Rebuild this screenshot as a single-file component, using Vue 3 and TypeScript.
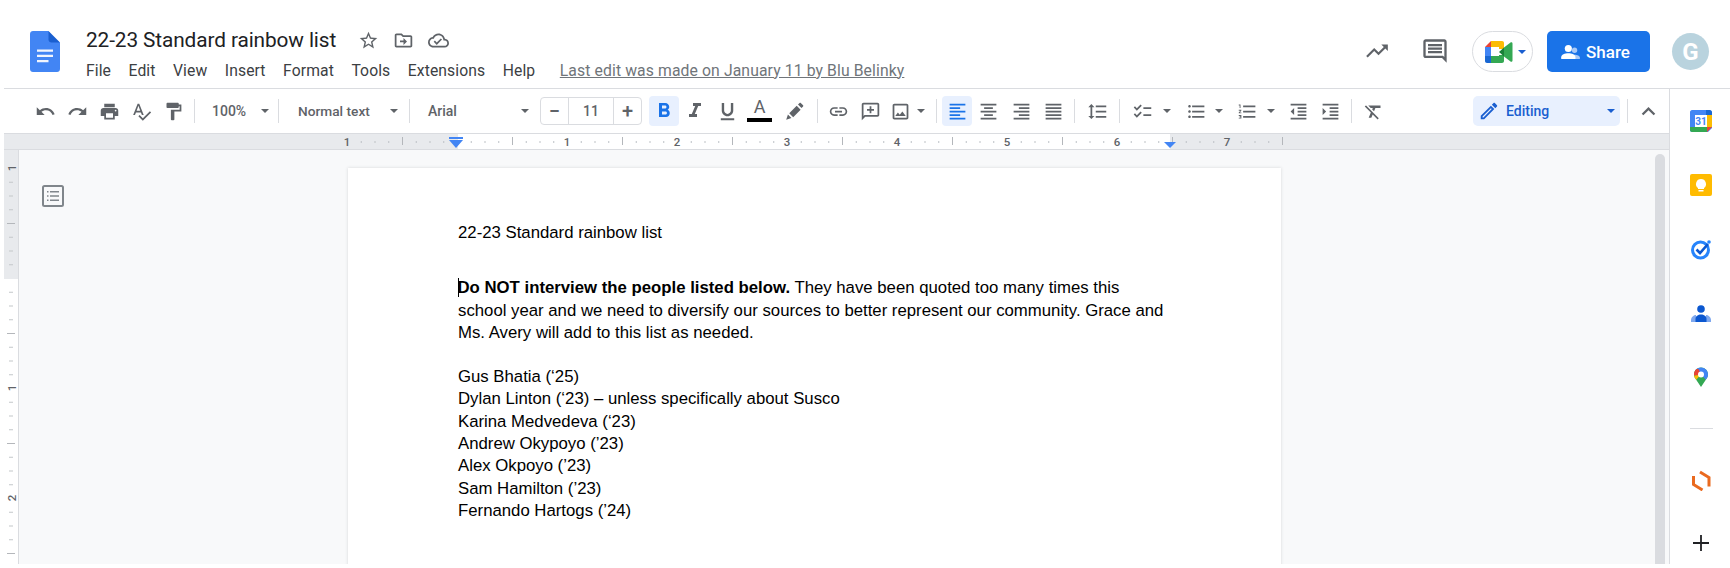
<script setup lang="ts">
interface Tool {
  kind: 'icon' | 'caret' | 'sep' | 'zoom' | 'style' | 'font' | 'size' | 'color' | 'edit'
  d?: string
  w?: number
  ml?: number
  on?: boolean
  size?: number
}

const P = {
  undo: 'M12.5 8c-2.65 0-5.05.99-6.9 2.6L2 7v9h9l-3.62-3.62c1.39-1.16 3.16-1.88 5.12-1.88 3.54 0 6.55 2.31 7.6 5.5l2.37-.78C21.08 11.03 17.15 8 12.5 8z',
  redo: 'M18.4 10.6C16.55 8.99 14.15 8 11.5 8c-4.65 0-8.58 3.03-9.96 7.22L3.9 16c1.05-3.19 4.05-5.5 7.6-5.5 1.95 0 3.73.72 5.12 1.88L13 16h9V7l-3.6 3.6z',
  print: 'M19 8H5c-1.66 0-3 1.34-3 3v6h4v4h12v-4h4v-6c0-1.66-1.34-3-3-3zm-3 11H8v-5h8v5zm3-7c-.55 0-1-.45-1-1s.45-1 1-1 1 .45 1 1-.45 1-1 1zm-1-9H6v4h12V3z',
  spell: 'M12.45 16h2.09L9.43 3H7.57L2.46 16h2.09l1.12-3h5.64l1.14 3zm-6.02-5L8.5 5.48 10.57 11H6.43zm15.16.59l-8.09 8.09L9.83 16l-1.41 1.41 5.09 5.09L23 13l-1.41-1.41z',
  paint: 'M18 4V3c0-.55-.45-1-1-1H5c-.55 0-1 .45-1 1v4c0 .55.45 1 1 1h12c.55 0 1-.45 1-1V6h1v4H9v11c0 .55.45 1 1 1h2c.55 0 1-.45 1-1v-9h8V4h-3z',
  bold: 'M15.6 10.79c.97-.67 1.65-1.77 1.65-2.79 0-2.26-1.75-4-4-4H7v14h7.04c2.09 0 3.71-1.7 3.71-3.79 0-1.52-.86-2.82-2.15-3.42zM10 6.5h3c.83 0 1.5.67 1.5 1.5s-.67 1.5-1.5 1.5h-3v-3zm3.5 9H10v-3h3.5c.83 0 1.5.67 1.5 1.5s-.67 1.5-1.5 1.5z',
  italic: 'M10 4v3h2.21l-3.42 8H6v3h8v-3h-2.21l3.42-8H18V4z',
  under: 'M12 17c3.31 0 6-2.69 6-6V3h-2.5v8c0 1.93-1.57 3.5-3.5 3.5S8.5 12.93 8.5 11V3H6v8c0 3.31 2.69 6 6 6zm-7 2v2h14v-2H5z',
  high: 'M2.500 21.500l2-6 4 4zM6 14l8.500-8.500 4.500 4.500-8.500 8.500zM16 4l1.800-1.800c.4-.4 1-.4 1.400 0l2.600 2.600c.4.4.4 1 0 1.400L20 8z',
  link: 'M3.9 12c0-1.71 1.39-3.1 3.1-3.1h4V7H7c-2.76 0-5 2.24-5 5s2.24 5 5 5h4v-1.9H7c-1.71 0-3.1-1.39-3.1-3.1zM8 13h8v-2H8v2zm9-6h-4v1.9h4c1.71 0 3.1 1.39 3.1 3.1s-1.39 3.1-3.1 3.1h-4V17h4c2.76 0 5-2.24 5-5s-2.24-5-5-5z',
  addc: 'M20 2H4c-1.1 0-2 .9-2 2v18l4-4h14c1.1 0 2-.9 2-2V4c0-1.1-.9-2-2-2zm0 14H5.17L4 17.17V4h16v12zM11 14h2v-3h3V9h-3V6h-2v3H8v2h3z',
  image: 'M19 5v14H5V5h14m0-2H5c-1.1 0-2 .9-2 2v14c0 1.1.9 2 2 2h14c1.1 0 2-.9 2-2V5c0-1.1-.9-2-2-2zm-4.86 8.86l-3 3.87L9 13.14 6 17h12l-3.86-5.14z',
  left: 'M15 15H3v2h12v-2zm0-8H3v2h12V7zM3 13h18v-2H3v2zm0 8h18v-2H3v2zM3 3v2h18V3H3z',
  center: 'M7 15v2h10v-2H7zm-4 6h18v-2H3v2zm0-8h18v-2H3v2zm4-6v2h10V7H7zM3 3v2h18V3H3z',
  right: 'M3 21h18v-2H3v2zm6-4h12v-2H9v2zm-6-4h18v-2H3v2zm6-4h12V7H9v2zM3 3v2h18V3H3z',
  justify: 'M3 21h18v-2H3v2zm0-4h18v-2H3v2zm0-4h18v-2H3v2zm0-4h18V7H3v2zm0-6v2h18V3H3z',
  spacing: 'M6 7h2.5L5 3.5 1.5 7H4v10H1.5L5 20.5 8.5 17H6V7zm4-2v2h12V5H10zm0 14h12v-2H10v2zm0-6h12v-2H10v2z',
  check: 'M22 7h-9v2h9V7zm0 8h-9v2h9v-2zM5.54 11L2 7.46l1.41-1.41 2.12 2.12 4.24-4.24 1.41 1.41L5.54 11zm0 8L2 15.46l1.41-1.41 2.12 2.12 4.24-4.24 1.41 1.41L5.54 19z',
  bullet: 'M4 10.5c-.83 0-1.5.67-1.5 1.5s.67 1.5 1.5 1.5 1.5-.67 1.5-1.5-.67-1.5-1.5-1.5zm0-6c-.83 0-1.5.67-1.5 1.5S3.17 7.5 4 7.5 5.5 6.83 5.5 6 4.83 4.5 4 4.5zm0 12c-.83 0-1.5.68-1.5 1.5s.68 1.5 1.5 1.5 1.5-.68 1.5-1.5-.67-1.5-1.5-1.5zM7 19h14v-2H7v2zm0-6h14v-2H7v2zm0-8v2h14V5H7z',
  number: 'M2 17h2v.5H3v1h1v.5H2v1h3v-4H2v1zm1-9h1V4H2v1h1v3zm-1 3h1.8L2 13.1v.9h3v-1H3.2L5 10.9V10H2v1zm5-6v2h14V5H7zm0 14h14v-2H7v2zm0-6h14v-2H7v2z',
  dec: 'M11 17h10v-2H11v2zm-8-5l4 4V8l-4 4zm0 9h18v-2H3v2zM3 3v2h18V3H3zm8 6h10V7H11v2zm0 4h10v-2H11v2z',
  inc: 'M3 21h18v-2H3v2zM3 8v8l4-4-4-4zm8 9h10v-2H11v2zM3 3v2h18V3H3zm8 6h10V7H11v2zm0 4h10v-2H11v2z',
  clear: 'M3.27 5L2 6.27l6.97 6.97L6.5 19h3l1.57-3.66L16.73 21 18 19.73 3.55 5.27 3.27 5zM6 5v.18L8.82 8h2.4l-.72 1.68 2.1 2.1L14.21 8H20V5H6z',
  less: 'M12 8l-6 6 1.41 1.41L12 10.83l4.59 4.58L18 14z',
}

const tools: Tool[] = [
  { kind: 'icon', d: P.undo, w: 32, ml: 25 },
  { kind: 'icon', d: P.redo, w: 32 },
  { kind: 'icon', d: P.print, w: 32 },
  { kind: 'icon', d: P.spell, w: 32 },
  { kind: 'icon', d: P.paint, w: 32 },
  { kind: 'sep', ml: 5 },
  { kind: 'zoom' },
  { kind: 'sep' },
  { kind: 'style' },
  { kind: 'sep' },
  { kind: 'font' },
  { kind: 'size', ml: 8 },
  { kind: 'icon', d: P.bold, w: 30, ml: 7, on: true, size: 24 },
  { kind: 'icon', d: P.italic, w: 32, size: 24 },
  { kind: 'icon', d: P.under, w: 32, size: 23 },
  { kind: 'color', w: 33 },
  { kind: 'icon', d: P.high, w: 36 },
  { kind: 'sep', ml: 5 },
  { kind: 'icon', d: P.link, w: 32, ml: 4 },
  { kind: 'icon', d: P.addc, w: 32 },
  { kind: 'icon', d: P.image, w: 28 },
  { kind: 'caret', w: 14 },
  { kind: 'sep', ml: 8 },
  { kind: 'icon', d: P.left, w: 30, ml: 5, on: true },
  { kind: 'icon', d: P.center, w: 33 },
  { kind: 'icon', d: P.right, w: 32 },
  { kind: 'icon', d: P.justify, w: 32 },
  { kind: 'sep', ml: 5 },
  { kind: 'icon', d: P.spacing, w: 32, ml: 6 },
  { kind: 'sep', ml: 6 },
  { kind: 'icon', d: P.check, w: 32, ml: 6 },
  { kind: 'caret', w: 14, ml: 2 },
  { kind: 'icon', d: P.bullet, w: 32, ml: 6 },
  { kind: 'caret', w: 14 },
  { kind: 'icon', d: P.number, w: 32, ml: 5 },
  { kind: 'caret', w: 14, ml: 1 },
  { kind: 'icon', d: P.dec, w: 32, ml: 4 },
  { kind: 'icon', d: P.inc, w: 32 },
  { kind: 'sep', ml: 5 },
  { kind: 'icon', d: P.clear, w: 32, ml: 5 },
  { kind: 'edit', ml: 84 },
  { kind: 'sep', ml: 7 },
  { kind: 'icon', d: P.less, w: 32, ml: 4, size: 27 },
]

const toolStyle = (t: Tool) => ({
  width: t.w ? `${t.w}px` : undefined,
  marginLeft: t.ml ? `${t.ml}px` : undefined,
})

const menus = ['File', 'Edit', 'View', 'Insert', 'Format', 'Tools', 'Extensions', 'Help']

// Horizontal ruler, in ruler pixels (x = 0 is the page's x = 4)
const origin = 453
const hTicks: { x: number; long: boolean }[] = []
for (let k = -8; k <= 60; k++) {
  if (k % 8 === 0) continue
  hTicks.push({ x: origin + k * 13.75, long: k % 4 === 0 })
}
const hNums = [
  { n: 1, x: origin - 110 },
  ...[1, 2, 3, 4, 5, 6, 7].map((n) => ({ n, x: origin + n * 110 })),
]

// Vertical ruler, y = 0 is the page's y = 150
const vTicks: { y: number; long: boolean }[] = []
for (let k = 0; k <= 32; k++) {
  if (k % 8 === 0) continue
  vTicks.push({ y: 18 + k * 13.75, long: k % 4 === 0 })
}
const vNums = [
  { n: 1, y: 18 },
  { n: 1, y: 238 },
  { n: 2, y: 348 },
]

const people = [
  'Gus Bhatia (‘25)',
  'Dylan Linton (‘23) – unless specifically about Susco',
  'Karina Medvedeva (‘23)',
  'Andrew Okypoyo (’23)',
  'Alex Okpoyo (’23)',
  'Sam Hamilton (’23)',
  'Fernando Hartogs (’24)',
]
</script>

<template>
  <div class="app">
    <header class="header">
      <svg class="logo" width="30" height="41" viewBox="0 0 30 41">
        <path d="M18.5 0H3C1.3 0 0 1.3 0 3v35c0 1.700 1.300 3 3 3h24c1.700 0 3-1.300 3-3V11.500L23 7z" fill="#4285f4" />
        <path d="M18.500 0v8.500c0 1.700 1.300 3 3 3H30z" fill="#1a5fd0" />
        <path d="M7 18.500h16v2.300H7zM7 23.800h16v2.300H7zM7 29h11.500v2.300H7z" fill="#f1f5fd" />
      </svg>
      <div class="titles">
        <div class="title-row">
          <span class="doc-name">22-23 Standard rainbow list</span>
          <svg class="hicon star" width="21" height="21" viewBox="0 0 24 24"><path fill="#5f6368" d="M22 9.240l-7.190-.62L12 2 9.190 8.630 2 9.240l5.460 4.730L5.820 21 12 17.270 18.180 21l-1.630-7.030L22 9.240zM12 15.400l-3.760 2.270 1-4.280-3.320-2.880 4.380-.38L12 6.100l1.710 4.040 4.380.38-3.320 2.880 1 4.280L12 15.400z" /></svg>
          <svg class="hicon folder" width="21" height="21" viewBox="0 0 24 24"><path fill="#5f6368" d="M20 6h-8l-2-2H4c-1.100 0-1.990.9-1.990 2L2 18c0 1.100.9 2 2 2h16c1.100 0 2-.9 2-2V8c0-1.100-.9-2-2-2zm0 12H4V6h5.170l2 2H20v10zm-8-4H8v-2h4V9l4 4-4 4v-3z" /></svg>
          <svg class="hicon cloud" width="21" height="21" viewBox="0 0 24 24"><path fill="#5f6368" d="M19.350 10.040C18.670 6.590 15.640 4 12 4 9.110 4 6.600 5.640 5.350 8.040 2.340 8.360 0 10.910 0 14c0 3.310 2.690 6 6 6h13c2.760 0 5-2.240 5-5 0-2.640-2.050-4.780-4.650-4.960zM19 18H6c-2.210 0-4-1.790-4-4 0-2.050 1.530-3.760 3.560-3.970l1.070-.11.5-.95C8.080 7.140 9.940 6 12 6c2.620 0 4.880 1.860 5.390 4.430l.3 1.500 1.530.11c1.560.1 2.780 1.410 2.780 2.960 0 1.650-1.350 3-3 3zm-9-3.820l-2.090-2.090L6.500 13.500 10 17l6.010-6.010-1.410-1.410z" /></svg>
        </div>
        <nav class="menu-row">
          <span v-for="m in menus" :key="m" class="menu">{{ m }}</span>
          <span class="last-edit">Last edit was made on January 11 by Blu Belinky</span>
        </nav>
      </div>
      <div class="actions">
        <svg class="act trend" width="26" height="26" viewBox="0 0 24 24"><path fill="#5f6368" d="M16 6l2.290 2.290-4.880 4.880-4-4L2 16.590 3.410 18l6-6 4 4 6.300-6.290L22 12V6z" /></svg>
        <svg class="act comment" width="28" height="28" viewBox="0 0 24 24"><path fill="#5f6368" d="M21.990 4c0-1.100-.89-2-1.990-2H4c-1.100 0-2 .9-2 2v12c0 1.100.9 2 2 2h14l4 4-.01-18zM20 4v13.170L18.830 16H4V4h16zM6 12h12v2H6zm0-3h12v2H6zm0-3h12v2H6z" /></svg>
        <div class="meet">
          <svg width="28" height="22" viewBox="0 0 28 22">
            <path d="M6 0L0 6h6z" fill="#ea4335" />
            <path d="M6 0h11c1.200 0 2 .8 2 2v6l-5 0V6H6z" fill="#fbbc04" />
            <path d="M0 6h6v9H0z" fill="#4285f4" />
            <path d="M0 15h6v7H2c-1.200 0-2-.8-2-2z" fill="#1967d2" />
            <path d="M6 15h8v-1l5 0v6c0 1.200-.8 2-2 2H6z" fill="#34a853" />
            <path d="M14 11l5-4.500v9z" fill="#188038" />
            <path d="M19 6.500l6.500-5c.9-.6 2-.1 2 1v17c0 1.100-1.100 1.600-2 1l-6.500-5z" fill="#34a853" />
          </svg>
          <i class="tri blue" />
        </div>
        <div class="share">
          <svg width="20" height="16" viewBox="0 0 22 18">
            <circle cx="15" cy="7" r="3" fill="#a9c9f7" />
            <path d="M11 17c0-3 1-5 4-5s6 1.500 6 3v2z" fill="#a9c9f7" />
            <circle cx="8" cy="5" r="4" fill="#fff" />
            <path d="M0 17v-2c0-3 4-4.500 8-4.500s8 1.500 8 4.500v2z" fill="#fff" />
          </svg>
          <span>Share</span>
        </div>
        <div class="avatar">G</div>
      </div>
    </header>

    <div class="main">
      <section class="editor">
        <div class="toolbar">
          <template v-for="(t, i) in tools" :key="i">
            <div v-if="t.kind === 'icon'" class="tool" :class="{ on: t.on }" :style="toolStyle(t)">
              <svg :width="t.size ?? 21" :height="t.size ?? 21" viewBox="0 0 24 24"><path :d="t.d" /></svg>
            </div>
            <div v-else-if="t.kind === 'caret'" class="tool" :style="toolStyle(t)"><i class="tri" /></div>
            <div v-else-if="t.kind === 'sep'" class="sep" :style="toolStyle(t)" />
            <div v-else-if="t.kind === 'zoom'" class="drop zoom"><span>100%</span><i class="tri" /></div>
            <div v-else-if="t.kind === 'style'" class="drop style"><span>Normal text</span><i class="tri" /></div>
            <div v-else-if="t.kind === 'font'" class="drop font"><span>Arial</span><i class="tri" /></div>
            <div v-else-if="t.kind === 'size'" class="size" :style="toolStyle(t)">
              <span class="size-btn">−</span><span class="size-val">11</span><span class="size-btn">+</span>
            </div>
            <div v-else-if="t.kind === 'color'" class="tool color" :style="toolStyle(t)">
              <span class="color-a">A</span><i class="color-bar" />
            </div>
            <div v-else class="editing" :style="toolStyle(t)">
              <svg width="22" height="22" viewBox="0 0 24 24"><path fill="#1a5fd0" d="M14.060 9.020l.92.92L5.920 19H5v-.92l9.060-9.060M17.660 3c-.25 0-.51.1-.7.29l-1.830 1.830 3.750 3.750 1.830-1.830c.39-.39.39-1.020 0-1.410l-2.340-2.340c-.2-.2-.45-.29-.71-.29zm-3.600 3.190L3 17.250V21h3.750L17.810 9.940l-3.750-3.750z" /></svg>
              <span>Editing</span>
              <i class="tri blue" />
            </div>
          </template>
        </div>

        <svg class="h-ruler" width="1665" height="15" viewBox="0 0 1665 15">
          <rect x="454" y="0" width="712" height="15" fill="#fff" />
          <rect v-for="(t, i) in hTicks" :key="i" :x="t.x" :y="t.long ? 3 : 7" width="1" :height="t.long ? 8 : 2" :fill="t.long ? '#b4b7bb' : '#bdc1c6'" />
          <text v-for="(t, i) in hNums" :key="'n' + i" :x="t.x" y="12" text-anchor="middle" class="rnum">{{ t.n }}</text>
          <path d="M445 3h14v2h-14zM445 6h14l-7 8z" fill="#4285f4" />
          <path d="M1160 8h12l-6 6z" fill="#4285f4" />
        </svg>

        <div class="work">
          <svg class="v-ruler" width="14" height="414" viewBox="0 0 14 414">
            <rect x="0" y="0" width="14" height="129" fill="#e8eaed" />
            <rect v-for="(t, i) in vTicks" :key="i" :x="t.long ? 3 : 5" :y="t.y" :width="t.long ? 8 : 4" height="1" :fill="t.long ? '#b4b7bb' : '#c4c7ca'" />
            <text v-for="(t, i) in vNums" :key="i" class="rnum" text-anchor="middle" :transform="`translate(12 ${t.y}) rotate(-90)`">{{ t.n }}</text>
          </svg>
          <div class="canvas">
            <svg class="outline-icon" width="22" height="22" viewBox="0 0 22 22">
              <rect x="1" y="1" width="20" height="20" rx="1.500" fill="none" stroke="#80868b" stroke-width="2" />
              <path d="M5 6h1.500v1.500H5zM5 10.200h1.500v1.500H5zM5 14.500h1.500V16H5zM8 6h9v1.500H8zM8 10.200h9v1.500H8zM8 14.500h9V16H8z" fill="#80868b" />
            </svg>
            <article class="page">
              <p class="gap-title">22-23 Standard rainbow list</p>
              <p class="gap-para"><span class="cursor" /><b>Do NOT interview the people listed below.</b> They have been quoted too many times this<br />school year and we need to diversify our sources to better represent our community. Grace and<br />Ms. Avery will add to this list as needed.</p>
              <p v-for="p in people" :key="p">{{ p }}</p>
            </article>
            <div class="scrollbar" />
          </div>
        </div>
      </section>

      <aside class="side">
        <svg class="side-icon" width="22" height="22" viewBox="0 0 22 22">
          <path d="M2 0h16l4 4v14l-4 4H2c-1 0-2-1-2-2V2c0-1 1-2 2-2z" fill="#4285f4" />
          <path d="M16 0h4c1 0 2 1 2 2v3h-6z" fill="#1967d2" />
          <rect x="5" y="5" width="12" height="12" fill="#fff" />
          <rect x="17" y="5" width="5" height="12" fill="#fbbc04" />
          <path d="M0 17h17v5H2c-1 0-2-1-2-2z" fill="#34a853" />
          <path d="M17 17h5l-5 5z" fill="#ea4335" />
          <text x="11" y="15" text-anchor="middle" class="cal">31</text>
        </svg>
        <svg class="side-icon" width="22" height="22" viewBox="0 0 22 22">
          <rect width="22" height="22" rx="2" fill="#ffbb00" />
          <path d="M11 5a5 5 0 0 0-3 9v1h6v-1a5 5 0 0 0-3-9z" fill="#fff" />
          <rect x="8.500" y="16" width="5" height="1.500" fill="#fff" />
        </svg>
        <svg class="side-icon" width="22" height="22" viewBox="0 0 22 22">
          <circle cx="10.500" cy="12" r="8" fill="none" stroke="#2684fc" stroke-width="3" />
          <path d="M6.500 11.500l3.500 3.500 8-9" fill="none" stroke="#0b57d0" stroke-width="2.600" />
          <circle cx="19" cy="4" r="1.800" fill="#2684fc" />
        </svg>
        <svg class="side-icon" width="22" height="22" viewBox="0 -1 22 22">
          <circle cx="11" cy="6" r="3.800" fill="#0b57d0" />
          <path d="M1 19v-2c0-3 3-5 5-5v7z" fill="#7fa8ee" />
          <path d="M21 19v-2c0-3-3-5-5-5v7z" fill="#7fa8ee" />
          <path d="M5.500 19v-3c0-3 2.500-4.500 5.500-4.500s5.500 1.500 5.500 4.500v3z" fill="#0b57d0" />
        </svg>
        <svg class="side-icon" width="22" height="22" viewBox="0 0 22 22">
          <clipPath id="pin-shape">
            <path d="M11 1.500c-4 0-7 3-7 7 0 2 .8 3.500 2 5l5 7.500 5-7.500c1.200-1.500 2-3 2-5 0-4-3-7-7-7z" />
          </clipPath>
          <g clip-path="url(#pin-shape)">
            <rect width="22" height="22" fill="#34a853" />
            <path d="M3 0h20v8l-7 6-5-5.500-3-3z" fill="#4285f4" />
            <path d="M3 3h5.500l2.500 5.500L3 10z" fill="#ea4335" />
            <path d="M3 10l8-1.500-5.500 6L3 13z" fill="#fbbc04" />
          </g>
          <circle cx="11" cy="8.500" r="3" fill="#fff" />
        </svg>
        <div class="side-sep" />
        <svg class="side-icon orange" width="22" height="22" viewBox="0 0 22 22">
          <path d="M10 3l9 5.500v9M3.500 7v8.500l9 5.500" fill="none" stroke="#ea6a1f" stroke-width="3" />
        </svg>
        <svg class="side-icon plus" width="22" height="22" viewBox="0 0 22 22">
          <path d="M11 3v16M3 11h16" stroke="#202124" stroke-width="1.800" />
        </svg>
      </aside>
    </div>
  </div>
</template>

<style>
html, body { margin: 0; background: #fff; }
</style>

<style scoped>
.app {
  width: 1730px;
  height: 568px;
  overflow: hidden;
  background: #fff;
  font-family: Roboto, "Liberation Sans", sans-serif;
}
.header {
  height: 88px;
  margin-left: 4px;
  border-bottom: 1px solid #dadce0;
  display: flex;
  align-items: flex-start;
}
.logo { margin: 31px 0 0 26px; flex: none; }
.titles { margin: 26px 0 0 26px; }
.title-row { height: 28px; display: flex; align-items: center; }
.doc-name { font-size: 20.8px; color: #202124; width: 250px; white-space: nowrap; letter-spacing: -0.1px; }
.hicon { flex: none; }
.star { margin-left: 22px; }
.folder { margin-left: 14px; }
.cloud { margin-left: 14px; }
.menu-row { display: flex; height: 22px; margin-top: 5px; align-items: center; }
.menu { font-size: 15.7px; color: #3c4043; margin-right: 17.5px; white-space: nowrap; letter-spacing: .1px; }
.last-edit { font-size: 15.75px; color: #70757a; text-decoration: underline; margin-left: 7px; white-space: nowrap; letter-spacing: .1px; }
.actions { margin-left: auto; display: flex; align-items: center; height: 41px; margin-top: 31px; }
.act { flex: none; margin-top: -2px; }
.trend { margin-right: 31px; }
.comment { margin-right: 23px; }
.meet {
  width: 61px;
  height: 41px;
  box-sizing: border-box;
  border: 1px solid #dadce0;
  border-radius: 21px;
  display: flex;
  align-items: center;
  padding-left: 12px;
  gap: 5px;
}
.share {
  width: 103px;
  height: 41px;
  margin-left: 14px;
  padding-right: 6px;
  box-sizing: border-box;
  background: #1a73e8;
  border-radius: 5px;
  color: #fff;
  display: flex;
  align-items: center;
  justify-content: center;
  gap: 5px;
  font-size: 17px;
  font-weight: 500;
}
.avatar {
  width: 37px;
  height: 37px;
  margin: 0 21px 0 22px;
  border-radius: 50%;
  background: #b9d3de;
  color: #fff;
  font-size: 24px;
  font-weight: 700;
  display: flex;
  align-items: center;
  justify-content: center;
}
.main { display: flex; height: 475px; }
.editor {
  width: 1665px;
  margin-left: 4px;
  border-right: 1px solid #dadce0;
  display: flex;
  flex-direction: column;
}
.toolbar {
  height: 44px;
  border-bottom: 1px solid #dadce0;
  display: flex;
  align-items: center;
  flex: none;
}
.tool {
  height: 30px;
  flex: none;
  display: flex;
  align-items: center;
  justify-content: center;
  border-radius: 4px;
}
.tool svg { fill: #5f6368; }
.tool.on { background: #e8f0fe; }
.tool.on svg { fill: #1a73e8; }
.tri {
  display: block;
  width: 0;
  height: 0;
  border-left: 4.5px solid transparent;
  border-right: 4.5px solid transparent;
  border-top: 4.5px solid #5f6368;
  flex: none;
}
.tri.blue { border-top-color: #1a5fd0; }
.sep { width: 1px; height: 24px; background: #dadce0; flex: none; }
.drop {
  height: 30px;
  flex: none;
  display: flex;
  align-items: center;
  justify-content: space-between;
  box-sizing: border-box;
  font-size: 14px;
  font-weight: 500;
  color: #5f6368;
}
.zoom { width: 83px; padding: 0 9px 0 17px; }
.style { width: 130px; padding: 0 11px 0 19px; font-size: 13.7px; }
.font { width: 122px; padding: 0 3px 0 18px; }
.size {
  width: 102px;
  height: 28px;
  box-sizing: border-box;
  border: 1px solid #dadce0;
  border-radius: 4px;
  display: flex;
  flex: none;
  align-items: center;
  color: #5f6368;
  font-size: 14px;
  font-weight: 500;
}
.size-btn { width: 27px; text-align: center; font-size: 20px; font-weight: 500; line-height: 26px; }
.size-val { width: 45px; text-align: center; border: solid #dadce0; border-width: 0 1px; line-height: 26px; }
.color { flex-direction: column; }
.color-a { font-size: 18px; color: #5f6368; line-height: 18px; height: 18px; margin-top: -3px; }
.color-bar { display: block; width: 25px; height: 4px; background: #000; margin-top: 2px; }
.editing {
  width: 147px;
  height: 30px;
  flex: none;
  border-radius: 5px;
  background: #e8f0fe;
  display: flex;
  align-items: center;
  padding: 0 5px 0 5px;
  box-sizing: border-box;
  color: #1a5fd0;
  font-size: 14px;
  font-weight: 500;
}
.editing span { margin-left: 6px; flex: 1; }
.h-ruler { display: block; flex: none; background: #e8eaed; border-bottom: 1px solid #dadce0; }
.rnum { font-family: Roboto, sans-serif; font-size: 11.5px; font-weight: 500; fill: #5f6368; }
.work { flex: 1; min-height: 0; display: flex; }
.v-ruler { flex: none; display: block; border-right: 1px solid #dadce0; }
.canvas {
  flex: 1;
  min-width: 0;
  position: relative;
  overflow: hidden;
  background: #f8f9fa;
  padding: 18px 0 0 329px;
  box-sizing: border-box;
}
.outline-icon { position: absolute; left: 23px; top: 35px; }
.page {
  width: 933px;
  height: 500px;
  padding: 54.400px 0 0 110px;
  box-sizing: border-box;
  background: #fff;
  box-shadow: 0 0 3px rgba(60, 64, 67, .18);
  font-family: "Liberation Sans", Arial, sans-serif;
  font-size: 16.76px;
  line-height: 22.3px;
  color: #000;
}
.page p { margin: 0; white-space: nowrap; }
.page .gap-title { margin-bottom: 32.8px; }
.page .gap-para { margin-bottom: 21.8px; }
.cursor {
  display: inline-block;
  width: 0;
  height: 19px;
  border-left: 1.5px solid #000;
  margin-right: -1.5px;
  vertical-align: -4px;
}
.scrollbar {
  position: absolute;
  left: 1636px;
  top: 4px;
  bottom: 0;
  width: 10px;
  border-radius: 5px 5px 0 0;
  background: #dadce0;
}
.side {
  width: 60px;
  height: 100%;
  display: flex;
  flex-direction: column;
  align-items: center;
  padding: 21px 0 0 2px;
  box-sizing: border-box;
}
.side-icon { flex: none; margin-bottom: 42px; }
.side-sep { width: 23px; height: 1px; background: #dadce0; margin: -2px 0 40px; flex: none; }
.orange { margin-bottom: 41px; }
.plus { margin-bottom: 0; }
.cal { font-family: Roboto, sans-serif; font-size: 10px; font-weight: 700; fill: #4285f4; }
</style>
